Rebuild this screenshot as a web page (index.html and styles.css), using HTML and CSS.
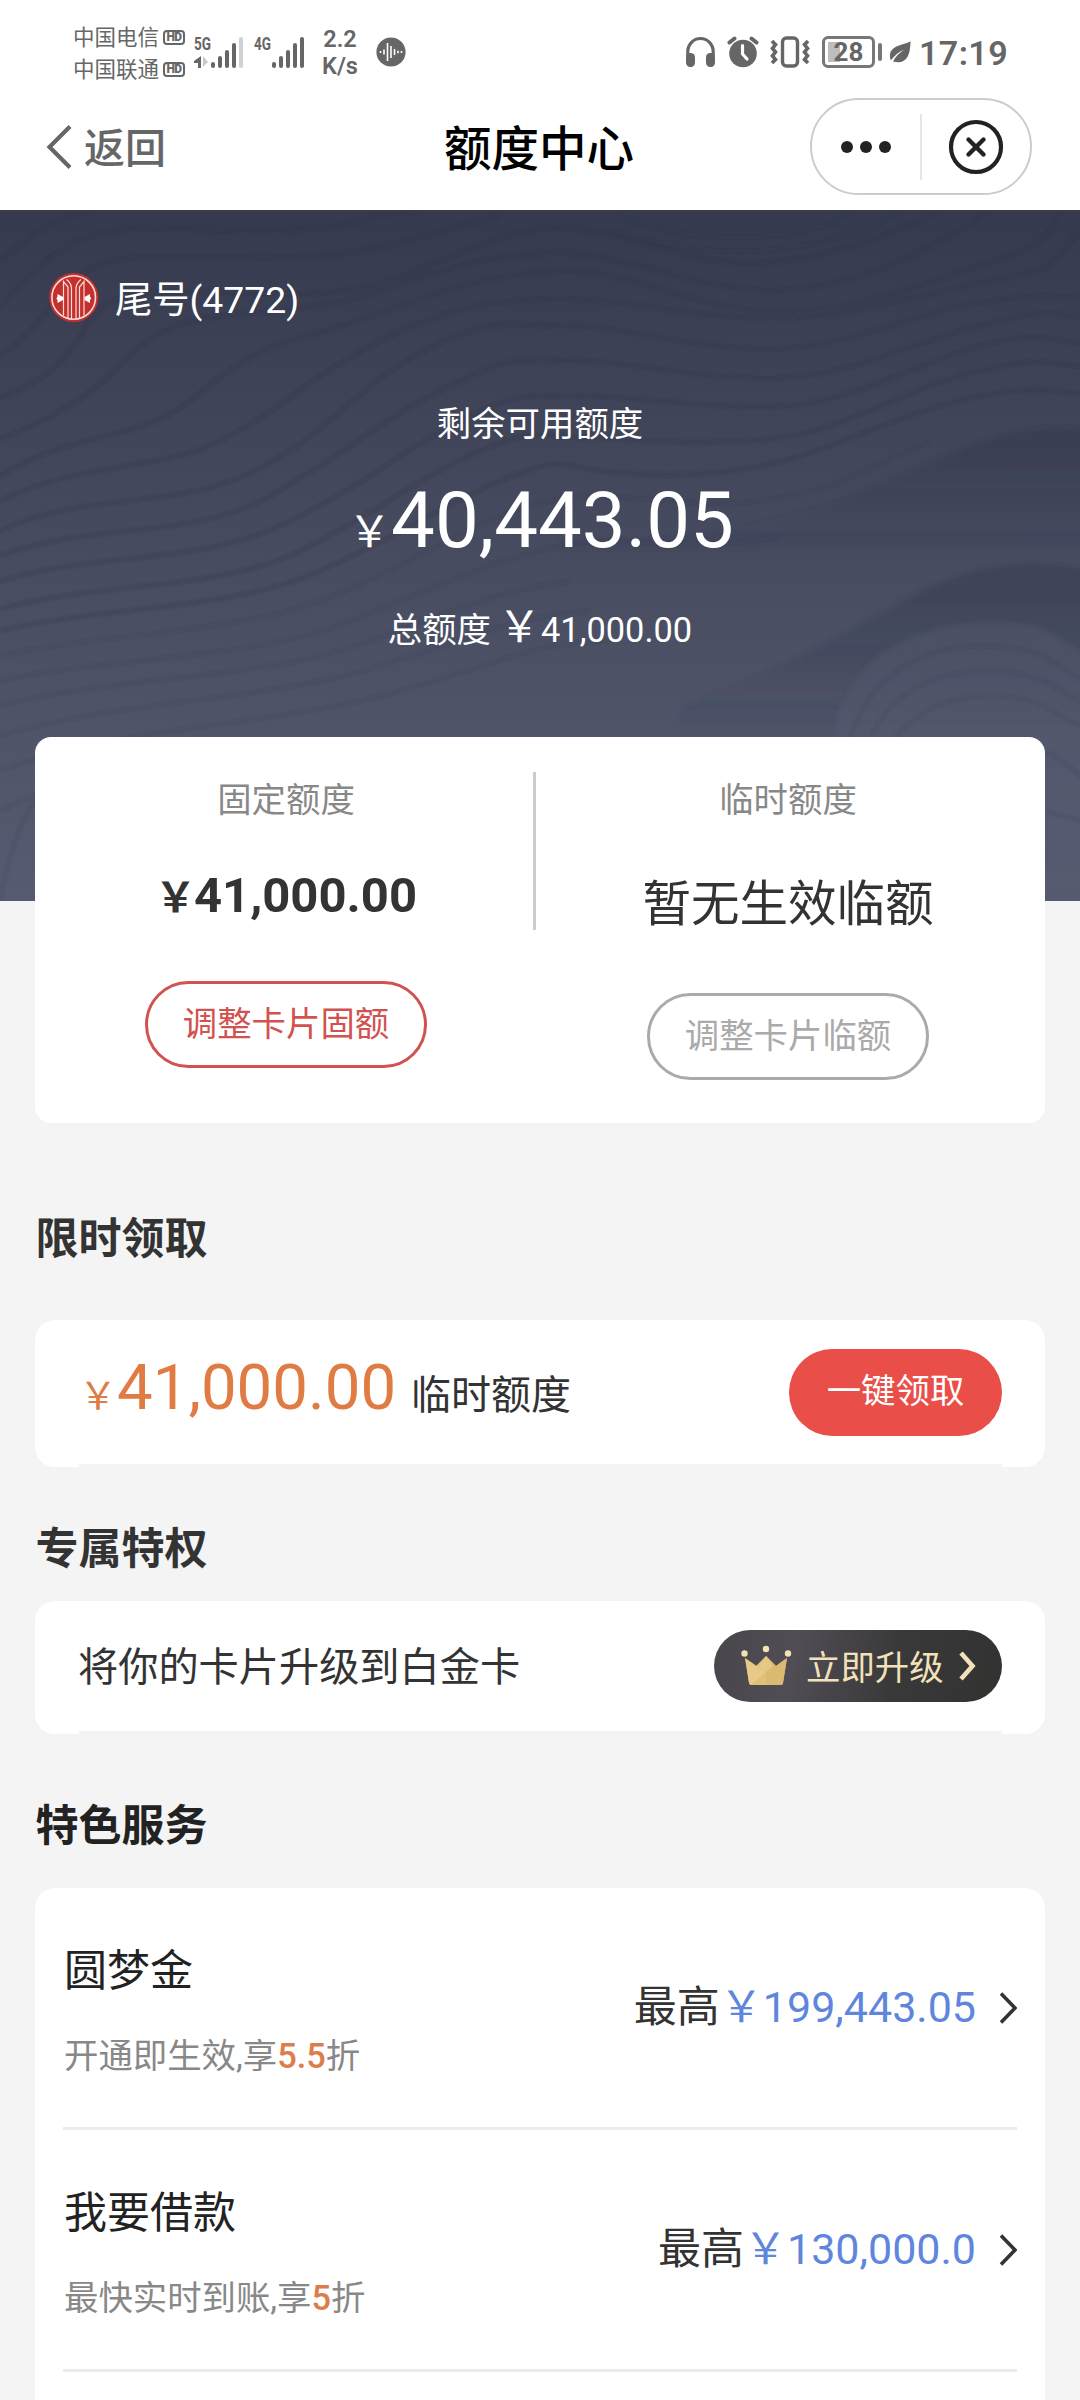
FILE: index.html
```html
<!DOCTYPE html>
<html lang="zh-CN">
<head>
<meta charset="utf-8">
<title>额度中心</title>
<link rel="stylesheet" href="styles.css">
</head>
<body>
<div class="statusbar">
  <div class="carriers">
    <div class="carrier">中国电信<span class="hd">HD</span></div>
    <div class="carrier">中国联通<span class="hd">HD</span></div>
  </div>
  <svg class="signal" width="108" height="34" viewBox="0 0 108 34">
    <g fill="#666">
      <text class="net" x="0" y="14" textLength="17" lengthAdjust="spacingAndGlyphs">5G</text>
      <text class="net" x="60" y="14" textLength="17" lengthAdjust="spacingAndGlyphs">4G</text>
      <path d="M7 20v12H4v-5H0v-2z"/>
      <path d="M9 20v11l5-5z" opacity=".35"/>
      <rect x="17" y="26" width="4" height="6" rx="2"/>
      <rect x="24" y="20" width="4" height="12" rx="2"/>
      <rect x="31" y="14" width="4" height="18" rx="2"/>
      <rect x="38" y="7" width="4" height="25" rx="2"/>
      <rect x="45" y="1" width="4" height="31" rx="2" opacity=".3"/>
      <rect x="78" y="26" width="4" height="6" rx="2"/>
      <rect x="85" y="20" width="4" height="12" rx="2"/>
      <rect x="92" y="14" width="4" height="18" rx="2"/>
      <rect x="99" y="7" width="4" height="25" rx="2"/>
      <rect x="106" y="1" width="4" height="31" rx="2"/>
    </g>
  </svg>
  <div class="speed"><span>2.2</span><span>K/s</span></div>
  <svg class="voice" width="30" height="30" viewBox="0 0 30 30">
    <circle cx="15" cy="15" r="14.6" fill="#666"/>
    <path d="M4.500 14v2M8 12.500v5M11.500 6v18M15 9v12M18.500 12v6M22 13.700v2.600M25.500 14v2" stroke="#fff" stroke-width="1.600"/>
  </svg>
  <div class="status-right">
    <svg width="124" height="32" viewBox="0 0 124 32">
      <path d="M1.800 22V15.500a12.700 13 0 0 1 25.400 0V22" fill="none" stroke="#666" stroke-width="3.200"/>
      <rect x="0" y="17" width="9" height="14" rx="4.200" fill="#666"/>
      <rect x="20" y="17" width="9" height="14" rx="4.200" fill="#666"/>
      <circle cx="57" cy="17.500" r="13.800" fill="#666"/>
      <path d="M43.500 6.500l5-4M70.500 6.500l-5-4" stroke="#666" stroke-width="4" stroke-linecap="round"/>
      <path d="M56.500 9.500v8.500l4.500 5" fill="none" stroke="#fff" stroke-width="3.200" stroke-linecap="round"/>
      <rect x="96.500" y="2" width="15" height="28" rx="4" fill="none" stroke="#666" stroke-width="3.400"/>
      <path d="M86 5l3.500 3.700-3 3.700 3 3.700-3 3.700 3 3.700-3.500 3.500M122 5l-3.500 3.700 3 3.700-3 3.700 3 3.700-3 3.700 3.500 3.500" fill="none" stroke="#666" stroke-width="3.600"/>
    </svg>
    <span class="battery">28</span>
    <span class="nub"></span>
    <svg class="leaf" width="22" height="24" viewBox="0 0 22 24">
      <path d="M21.500 1C18 5 2 4 1 15c-.3 2.500.3 4 1 5.200C6 15 10 12 15 9.500 10 13.500 6 17 4 21.600 17 25 21.500 16 21.500 1z" fill="#666"/>
    </svg>
    <span class="clock">17:19</span>
  </div>
</div>

<header class="nav">
  <div class="back">
    <svg width="26" height="44" viewBox="0 0 26 44"><path d="M24 1.500L3.500 22 24 42.500" fill="none" stroke="#666" stroke-width="4.200"/></svg>
    <span>返回</span>
  </div>
  <h1>额度中心</h1>
  <div class="capsule">
    <div class="dots"><i></i><i></i><i></i></div>
    <div class="close">
      <svg width="56" height="56" viewBox="0 0 56 56"><circle cx="28" cy="28" r="25" fill="none" stroke="#222" stroke-width="4.200"/><path d="M20.500 20.500l15 15M35.500 20.500l-15 15" stroke="#222" stroke-width="4.400" stroke-linecap="round"/></svg>
    </div>
  </div>
</header>

<section class="hero">
  <svg class="waves" width="1080" height="690" viewBox="0 0 1080 690">
    <defs>
      <linearGradient id="fold" x1="0" y1="0" x2="0" y2="1">
        <stop offset="0" stop-color="#2c3145" stop-opacity=".36"/>
        <stop offset=".5" stop-color="#2c3145" stop-opacity="0"/>
      </linearGradient>
      <linearGradient id="hill" x1="0" y1="0" x2="0" y2="1">
        <stop offset="0" stop-color="#6a6f86" stop-opacity=".2"/>
        <stop offset="1" stop-color="#6a6f86" stop-opacity="0"/>
      </linearGradient>
      <filter id="soft"><feGaussianBlur stdDeviation="1.300"/></filter>
      <filter id="softer"><feGaussianBlur stdDeviation="2.500"/></filter>
    </defs>
    <g filter="url(#softer)">
      <path d="M560 328C700 330 800 310 900 265S1010 217 1100 217V480H560z" fill="url(#fold)"/>
      <path d="M680 496C760 470 850 420 900 392S1010 340 1100 362V700H680z" fill="url(#fold)"/>
      <path d="M836 527C840 460 900 415 980 412S1050 430 1100 450V700H870z" fill="url(#hill)"/>
    </g>
    <g fill="none" stroke="#2a2f43" stroke-opacity=".27" stroke-width="4" filter="url(#soft)">
      <path d="M0 50C40 15 60 8 90 0M0 95C50 40 80 20 130 18S300 25 350 12 400 2 420 0"/>
      <path d="M0 145C60 105 60 48 140 46S300 52 370 38 450 15 500 5"/>
      <path d="M0 187C100 150 70 95 130 84S300 96 380 72 480 25 540 18 650 40 720 50 880 30 940 0"/>
      <path d="M0 228C120 180 110 150 160 122S300 108 380 80 490 45 550 42 680 72 750 78 900 60 990 0"/>
      <path d="M0 265C80 215 140 235 200 182S300 130 370 105 490 62 560 60 690 98 770 100 900 80 980 55 1050 15 1060 0"/>
      <path d="M0 290C80 250 160 260 220 230S310 165 380 130 490 88 560 88 690 107 770 107 910 85 990 70 1050 50 1080 20"/>
      <path d="M0 320C80 280 170 300 250 262S350 180 420 142 510 115 570 115 690 138 770 138 910 100 990 90 1050 90 1080 85"/>
      <path d="M0 345C90 310 190 330 270 285S370 215 440 180 510 148 570 149 690 167 770 167 910 130 990 112 1050 105 1080 106"/>
      <path d="M0 370C100 340 200 355 290 310S400 240 460 210 520 185 580 185 700 197 770 196 900 160 970 138 1050 130 1080 132"/>
      <path d="M0 398C100 370 220 380 300 340S420 265 480 240 530 225 590 227 700 234 770 228 900 180 970 162 1050 153 1080 155"/>
      <path d="M0 420C100 395 230 400 320 360S430 300 500 270 560 258 620 262 740 264 800 245 920 196 980 185 1050 180 1080 183"/>
    </g>
    <g fill="none" stroke="#2a2f43" stroke-opacity=".13" stroke-width="4" filter="url(#soft)">
      <path d="M0 445C110 420 240 425 340 382S470 310 540 292 680 300 760 290 870 255 930 230"/>
      <path d="M0 470C110 445 250 450 350 410S490 350 560 335 690 345 780 325"/>
      <path d="M0 495C110 465 260 470 370 430S500 380 570 370"/>
      <path d="M0 525C110 490 270 490 380 455S520 405 590 400"/>
      <path d="M0 560C110 515 280 515 400 480S540 430 610 430"/>
      <path d="M0 600C20 590 60 570 160 555M0 690C10 640 20 610 35 590"/>
      <path d="M850 527C870 465 920 435 980 435S1050 450 1080 468M870 527C890 485 930 460 985 460S1050 475 1080 490M895 527C915 505 940 485 990 485S1050 500 1080 515M1045 540Q1065 550 1080 565M1045 600Q1065 605 1080 610"/>
      <path d="M610 20C680 40 740 45 800 35S880 15 900 0M620 5C690 30 740 30 790 22S840 8 850 0"/>
    </g>
  </svg>
  <div class="account">
    <svg width="50" height="50" viewBox="0 0 50 50">
      <circle cx="24.700" cy="24.500" r="24.500" fill="#c4302b"/>
      <circle cx="24.700" cy="24.500" r="21.800" fill="none" stroke="#f6dcd9" stroke-width="1.600"/>
      <path d="M14.500 42.500V8.500L19 14V45M35 42.500V8.500L30.500 14V45M17.500 6.500Q23 10.500 22.500 17V46M32 6.500Q26.500 10.500 27 17V46" fill="none" stroke="#f6dcd9" stroke-width="1.200"/>
      <path d="M8.500 21L14 24v3l-5.500 3V27q-2-2 0-3zM41 21L35.500 24v3l5.500 3V27q2-2 0-3z" fill="#fff"/>
    </svg>
    <span>尾号(4772)</span>
  </div>
  <div class="avail-label">剩余可用额度</div>
  <div class="avail"><span class="yen">￥</span>40,443.05</div>
  <div class="total">总额度<span class="yen">￥</span>41,000.00</div>
</section>

<section class="limits card">
  <div class="limit fixed">
    <div class="label">固定额度</div>
    <div class="amount"><span class="yen">￥</span>41,000.00</div>
    <div class="pill red">调整卡片固额</div>
  </div>
  <div class="divider"></div>
  <div class="limit temp">
    <div class="label">临时额度</div>
    <div class="none">暂无生效临额</div>
    <div class="pill grey">调整卡片临额</div>
  </div>
</section>

<h2 class="h-claim">限时领取</h2>
<section class="claim card">
  <div class="inner">
    <div class="offer"><span class="yen">￥</span><span class="num">41,000.00</span><span class="what">临时额度</span></div>
    <div class="claim-btn">一键领取</div>
  </div>
</section>

<h2 class="h-perk">专属特权</h2>
<section class="perk card">
  <div class="inner">
    <div class="perk-text">将你的卡片升级到白金卡</div>
    <div class="upgrade">
      <svg width="52" height="42" viewBox="0 0 52 42">
        <path d="M4 13l11 8 10-10 10 10 11-8-4 25q-.5 2-2 2H10q-1.500 0-2-2z" fill="#e0c078"/>
        <path d="M25 11l10 10 11-8-4 25q-.5 2-2 2H25z" fill="#dbb970"/>
        <path d="M4 13l21 14-15 13q-1.500 0-2-2zM25 11l-7 10 7 6 7-6z" fill="#e8ce8c" opacity=".7"/>
        <circle cx="3.500" cy="8.500" r="3.200" fill="#f3e2b4"/><circle cx="25" cy="4" r="3.200" fill="#f3e2b4"/><circle cx="47" cy="8.500" r="3.200" fill="#f3e2b4"/>
      </svg>
      <span>立即升级</span>
      <svg width="18" height="30" viewBox="0 0 18 30"><path d="M3 2l11.500 13L3 28" fill="none" stroke="#f3e2b9" stroke-width="4.600"/></svg>
    </div>
  </div>
</section>

<h2 class="h-service">特色服务</h2>
<section class="services card">
  <div class="service">
    <div class="desc"><div class="name">圆梦金</div><div class="sub">开通即生效,享<b>5.5</b>折</div></div>
    <div class="max">最高<span>￥199,443.05</span></div>
    <svg width="19" height="34" viewBox="0 0 19 34"><path d="M3 2.500L17 17 3 31.500" fill="none" stroke="#333" stroke-width="3.600"/></svg>
  </div>
  <div class="service">
    <div class="desc"><div class="name">我要借款</div><div class="sub">最快实时到账,享<b>5</b>折</div></div>
    <div class="max">最高<span>￥130,000.0</span></div>
    <svg width="19" height="34" viewBox="0 0 19 34"><path d="M3 2.500L17 17 3 31.500" fill="none" stroke="#333" stroke-width="3.600"/></svg>
  </div>
</section>
</body>
</html>
```
FILE: styles.css
```css
* { box-sizing: border-box; }
html, body { height: 2400px; overflow: hidden; }
body {
  margin: 0;
  width: 1080px;
  background: #f4f4f4;
  color: #333;
  font-family: Roboto, "Noto Sans CJK SC", sans-serif;
  white-space: nowrap;
}
svg { display: block; flex: none; }
.yen { font-family: "Noto Sans CJK SC", sans-serif; line-height: 1; }

/* status bar */
.statusbar { height: 88px; padding: 0 72px 0 73px; background: #fff; display: flex; align-items: flex-start; color: #666; }
.carriers { width: 121px; padding-top: 22px; }
.carrier { height: 32px; line-height: 32px; font-size: 21.5px; display: flex; align-items: center; }
.hd { margin-left: 4px; margin-top: -2px; width: 22px; height: 15px; border: 2px solid #666; border-radius: 4px; font-size: 12px; line-height: 11px; font-weight: 900; text-align: center; letter-spacing: -.5px; }
.signal { margin-top: 36px; overflow: visible; }
.net { font: 700 18px Roboto, sans-serif; }
.speed { margin: 26px 0 0 18px; width: 40px; display: flex; flex-direction: column; align-items: center; font-size: 23.5px; line-height: 27px; font-weight: 600; }
.voice { margin: 37px 0 0 16px; }
.status-right { margin-left: auto; display: flex; align-items: center; height: 32px; margin-top: 36px; }
.battery { margin-left: 12px; width: 53px; height: 32px; border: 3px solid #777; border-radius: 6px; font-size: 26px; font-weight: 700; line-height: 26px; text-align: center; background: linear-gradient(90deg, #bdbdbd 12px, #fff 12px) 3px 3px / 41px 20px no-repeat; }
.nub { width: 4px; height: 18px; border-radius: 2px; background: #777; margin-left: 3px; }
.leaf { margin-left: 7px; }
.clock { margin-left: 8px; font-size: 34px; font-weight: 600; line-height: 36px; letter-spacing: .4px; margin-top: 2px; }

/* title bar */
.nav { height: 122px; background: #fff; display: grid; grid-template-columns: 1fr auto 1fr; align-items: center; padding: 0 48px 4px 46px; }
.back { display: flex; align-items: center; gap: 12px; font-size: 41px; line-height: 60px; font-weight: 500; color: #666; }
.back span { margin-top: 4px; }
h1 { margin: 5px 0 0 0; font-size: 47.5px; font-weight: 500; color: #000; line-height: 60px; }
.capsule { justify-self: end; width: 222px; height: 97px; border: 2px solid #ccc; border-radius: 49px; display: flex; align-items: center; margin-top: -1px; }
.dots { width: 110px; height: 66px; border-right: 2px solid #e6e6e6; display: flex; align-items: center; gap: 7px; padding-left: 29px; }
.dots i { width: 12px; height: 12px; border-radius: 50%; background: #222; }
.close { flex: 1; display: flex; justify-content: center; }

/* hero */
.hero { position: relative; height: 691px; padding-top: 62px; background: linear-gradient(#353a4e, #43485c 40%, #4f5469 75%, #565b71); color: #fff; text-align: center; border-top: 1px solid #3a3d44; }
.waves { position: absolute; left: 0; top: 0; }
.account, .avail-label, .avail, .total { position: relative; }
.account { height: 50px; padding-left: 49px; display: flex; align-items: center; gap: 16px; font-size: 37.3px; line-height: 50px; }
.account span { margin-top: 3px; }
.avail-label { margin-top: 81px; font-size: 34.4px; line-height: 40px; }
.avail { margin-top: 32px; height: 90px; line-height: 90px; font-size: 78px; display: flex; justify-content: center; align-items: baseline; padding-left: 2px; }
.avail .yen { font-size: 43px; }
.total { margin-top: 36px; height: 50px; line-height: 50px; font-size: 34.4px; }
.total .yen { font-size: 43px; margin-left: 7px; }

/* cards */
.card { margin: 0 35px; background: #fff; border-radius: 20px; }
.limits { position: relative; margin-top: -164px; height: 386px; display: flex; border-radius: 16px; }
.limit { display: flex; flex-direction: column; align-items: center; padding-top: 43px; }
.fixed { width: 502px; }
.temp { flex: 1; padding-right: 5px; }
.divider { width: 3px; height: 158px; margin: 35px 0 0 -4px; background: #ccc; }
.label { font-size: 34.4px; line-height: 40px; color: #888; }
.amount { margin-top: 48px; height: 56px; line-height: 56px; font-size: 49px; font-weight: 700; color: #333; display: flex; align-items: baseline; }
.amount .yen { font-size: 41px; font-weight: 700; margin-right: -2px; }
.none { margin-top: 55px; margin-bottom: -1px; font-size: 48.5px; line-height: 60px; }
.pill { width: 282px; height: 87px; border: 3px solid; border-radius: 44px; font-size: 34.4px; line-height: 81px; text-align: center; }
.red { margin-top: 57px; color: #d2524f; }
.grey { margin-top: 59px; color: #aaa; }

h2 { margin: 0 35.5px; font-size: 43px; line-height: 60px; font-weight: 700; }
.h-claim { margin-top: 86px; }
.h-perk { margin-top: 52px; }
.h-service { margin-top: 62px; color: #222; }
.inner { margin: 0 43px 0 44px; height: 100%; border-bottom: 3px solid #f4f4f4; display: flex; align-items: center; justify-content: space-between; }
.claim { margin-top: 51px; height: 147px; }
.offer { display: flex; align-items: baseline; height: 80px; line-height: 80px; margin-bottom: 9px; }
.offer .yen { font-size: 38px; color: #e07b43; }
.num { font-size: 63.5px; color: #e07b43; }
.what { font-size: 40px; margin-left: 15px; }
.claim-btn { width: 213px; height: 87px; border-radius: 44px; background: #ea4e48; color: #fff; font-size: 34.4px; line-height: 85px; text-align: center; }
.perk { margin-top: 22px; height: 133px; }
.perk-text { font-size: 40.2px; margin: -6px 0 0 -1px; }
.upgrade { width: 288px; height: 72px; border-radius: 36px; background: linear-gradient(100deg, #48464b, #504d55 28%, #3a393a 62%, #333231); display: flex; align-items: center; padding-left: 27px; color: #f3e2b9; font-size: 34.4px; }
.upgrade span { margin: -3px 14px 0 13px; }

/* services */
.services { margin-top: 32px; height: 560px; padding: 0 28px; }
.service { height: 242px; border-bottom: 3px solid #ebebeb; display: flex; align-items: center; }
.desc { flex: 1; align-self: flex-start; padding: 53px 0 0 1px; }
.name { font-size: 43px; line-height: 60px; color: #222; }
.sub { margin-top: 30px; font-size: 34.4px; line-height: 50px; color: #888; }
.sub b { font-weight: 500; color: #dc7d4b; }
.max { font-size: 43px; line-height: 60px; color: #333; margin-top: -2px; }
.max span { color: #5f86dc; }
.service > svg { margin-left: 22px; }
```
